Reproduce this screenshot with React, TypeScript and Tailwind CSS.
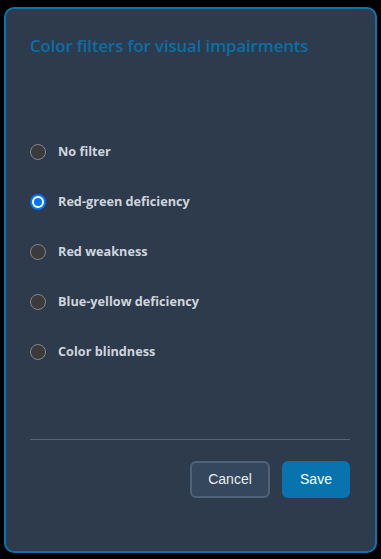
import React from 'react';

const OPTIONS = ['No filter', 'Red-green deficiency', 'Red weakness', 'Blue-yellow deficiency', 'Color blindness'];

const App: React.FC = () => {
  const selected = 1;

  return (
    <div className="w-[381px] h-[559px] bg-black pt-[7px] pb-[6px] px-[4px]" style={{ fontFamily: '"Open Sans", sans-serif' }}>
      <div className="h-full bg-[#2d3b4d] border-2 border-[#0a74b0] rounded-[10px] flex flex-col pl-[24px] pr-[25px]">
        {/* Title */}
        <h2 className="mt-[25px] text-[16.8px] leading-[24px] font-semibold text-[#0b6ea6] tracking-[-0.1px]">
          Color filters for visual impairments
        </h2>

        {/* Options */}
        <div className="mt-[86px] flex flex-col gap-[34px]">
          {OPTIONS.map((opt, i) => (
            <label key={i} className="flex items-center gap-[12px] h-[16px] cursor-pointer">
              {i === selected ? (
                <span className="w-[16px] h-[16px] rounded-full bg-[#0075ff] flex items-center justify-center shrink-0">
                  <span className="w-[12px] h-[12px] rounded-full bg-white flex items-center justify-center">
                    <span className="w-[8px] h-[8px] rounded-full bg-[#0075ff]" />
                  </span>
                </span>
              ) : (
                <span className="w-[16px] h-[16px] rounded-full bg-[#3b3b3b] border border-[#858585] shrink-0" />
              )}
              <span className="text-[12.7px] font-bold text-[#cfd5dd]">{opt}</span>
            </label>
          ))}
        </div>

        <div className="flex-1" />

        {/* Footer */}
        <div className="border-t border-[#56657a]" />
        <div className="mt-[21px] mb-[53px] flex justify-end gap-[12px]" style={{ fontFamily: '"Liberation Sans", Arial, sans-serif' }}>
          <button className="w-[80px] h-[37px] rounded-[6px] bg-[#34475c] border-2 border-[#4f6278] text-[14px] text-[#e8ecf0]">
            Cancel
          </button>
          <button className="w-[68px] h-[37px] rounded-[6px] bg-[#0973ad] text-[14px] text-white">
            Save
          </button>
        </div>
      </div>
    </div>
  );
};

export default App;
